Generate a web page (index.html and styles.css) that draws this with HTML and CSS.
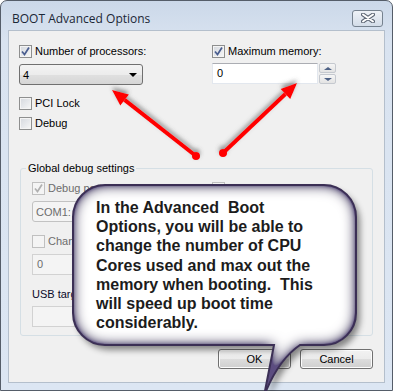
FILE: index.html
```html
<!DOCTYPE html>
<html lang="en">
<head>
    <meta charset="UTF-8">
    <title>BOOT Advanced Options</title>
    <link rel="stylesheet" href="styles.css">
</head>
<body>
    <div class="window">
        <div class="titlebar">
            <span class="title">BOOT Advanced Options</span>
            <span class="close">
                <svg width="14" height="10" viewBox="0 0 14 10">
                    <path d="M2 1.5 L12 8.5 M12 1.5 L2 8.5" stroke="#5d6674" stroke-width="4" stroke-linecap="round"/>
                    <path d="M2 1.5 L12 8.5 M12 1.5 L2 8.5" stroke="#fff" stroke-width="2" stroke-linecap="round"/>
                </svg>
            </span>
        </div>
        <div class="client">
            <div class="cols">
                <div class="col">
                    <label class="check"><span class="cb on"><svg viewBox="0 0 11 11"><polyline points="2,5.5 4.5,8.5 9,1.5"/></svg></span>Number of processors:</label>
                    <div class="combo"><span>4</span><i class="caret"></i></div>
                </div>
                <div class="col">
                    <label class="check"><span class="cb on"><svg viewBox="0 0 11 11"><polyline points="2,5.5 4.5,8.5 9,1.5"/></svg></span>Maximum memory:</label>
                    <div class="spin">
                        <div class="field">0</div>
                        <div class="updown">
                            <span class="arrow up"></span>
                            <span class="arrow down"></span>
                        </div>
                    </div>
                </div>
            </div>
            <div class="opts">
                <label class="check"><span class="cb"></span>PCI Lock</label>
                <label class="check"><span class="cb"></span>Debug</label>
            </div>
            <fieldset class="group">
                <legend>Global debug settings</legend>
                <div class="cols inner">
                    <div class="col">
                        <label class="check off"><span class="cb on"><svg viewBox="0 0 11 11"><polyline points="2,5.5 4.5,8.5 9,1.5"/></svg></span>Debug port:</label>
                        <div class="combo off"><span>COM1:</span><i class="caret"></i></div>
                    </div>
                    <div class="col">
                        <label class="check off"><span class="cb"></span>Baud rate:</label>
                        <div class="combo off narrow"><span>115200</span><i class="caret"></i></div>
                    </div>
                </div>
                <div class="row">
                    <label class="check off"><span class="cb"></span>Channel:</label>
                    <div class="field off">0</div>
                </div>
                <div class="usb">USB target name:</div>
                <div class="field off usb-field"></div>
            </fieldset>
            <div class="buttons">
                <button class="btn">OK</button>
                <button class="btn">Cancel</button>
            </div>
        </div>
    </div>

    <svg class="overlay" width="393" height="391" viewBox="0 0 393 391">
        <defs>
            <filter id="arrow_shadow" x="-20%" y="-20%" width="140%" height="140%">
                <feDropShadow dx="0" dy="-3" stdDeviation="2" flood-color="#555" flood-opacity="0.6"/>
            </filter>
            <filter id="bubble_fx" x="-10%" y="-10%" width="125%" height="130%">
                <feGaussianBlur in="SourceAlpha" stdDeviation="7" result="blur"/>
                <feComposite in="SourceAlpha" in2="blur" operator="arithmetic" k2="2" k3="-2" result="edge"/>
                <feFlood flood-color="#5b4d80"/>
                <feComposite in2="edge" operator="in" result="glow"/>
                <feMerge result="shape">
                    <feMergeNode in="SourceGraphic"/>
                    <feMergeNode in="glow"/>
                </feMerge>
                <feGaussianBlur in="SourceAlpha" stdDeviation="3" result="sb"/>
                <feOffset in="sb" dx="4" dy="5" result="so"/>
                <feFlood flood-color="#000" flood-opacity="0.45"/>
                <feComposite in2="so" operator="in" result="shadow"/>
                <feMerge>
                    <feMergeNode in="shadow"/>
                    <feMergeNode in="shape"/>
                </feMerge>
            </filter>
        </defs>

        <g filter="url(#arrow_shadow)" fill="#ff0000" stroke="#ff0000">
            <line x1="196" y1="156" x2="124.6" y2="99.9" stroke-width="4"/>
            <polygon points="112,90 128.9,94.4 120.3,105.4" stroke="none"/>
            <circle cx="196" cy="156" r="4" stroke="none"/>
            <line x1="223" y1="153" x2="285.4" y2="94" stroke-width="4"/>
            <polygon points="297,83 290.2,99.1 280.6,88.9" stroke="none"/>
            <circle cx="223" cy="153" r="4" stroke="none"/>
        </g>

        <path filter="url(#bubble_fx)" fill="#fff"
              d="M105 185 H324 A32 32 0 0 1 356 217 V313 A32 32 0 0 1 324 345 H300 Q278 360 264 396 L274 345 H105 A32 32 0 0 1 73 313 V217 A32 32 0 0 1 105 185 Z"/>
        <path fill="none" stroke="#3b2f55" stroke-width="2"
              d="M105 185 H324 A32 32 0 0 1 356 217 V313 A32 32 0 0 1 324 345 H300 Q278 360 264 396 L274 345 H105 A32 32 0 0 1 73 313 V217 A32 32 0 0 1 105 185 Z"/>
    </svg>

    <div class="callout-text">In the Advanced&nbsp; Boot<br>Options, you will be able to<br>change the number of CPU<br>Cores used and max out the<br>memory when booting.&nbsp; This<br>will speed up boot time<br>considerably.</div>
</body>
</html>
```

FILE: styles.css
```css
* {
    padding: 0;
    margin: 0;
    box-sizing: border-box;
}

body {
    width: 393px;
    height: 391px;
    position: relative;
    overflow: hidden;
    background: #fff;
    font: 11px "Liberation Sans", Arial, sans-serif;
    color: #000;
}

.window {
    width: 393px;
    height: 391px;
    display: flex;
    flex-direction: column;
    border: 1px solid #555d69;
    border-radius: 7px 7px 0 0;
    background: linear-gradient(#cbd8e9, #d9e3f0 40px, #dce6f3);
    padding: 0 7px 7px;
}

.titlebar {
    height: 29px;
    display: flex;
    align-items: center;
    justify-content: space-between;
    padding: 5px 2px 0 4px;
}

.title {
    font: 12px "Open Sans", sans-serif;
    color: #1b2736;
}

.close {
    width: 31px;
    height: 17px;
    display: flex;
    align-items: center;
    justify-content: center;
    border: 1px solid #76828f;
    border-radius: 3px;
    background: linear-gradient(#eef2f7, #d3dce8);
}

.client {
    flex: 1;
    background: #f0f0f0;
    border: 1px solid #b4bfcc;
    padding: 14px 11px 0 10px;
}

.cols {
    display: grid;
    grid-template-columns: 193px 1fr;
}

.check {
    display: flex;
    align-items: center;
    gap: 3px;
    height: 13px;
    line-height: 13px;
    white-space: nowrap;
}

.check.off {
    color: #6d6d6d;
}

.cb {
    width: 13px;
    height: 13px;
    flex: none;
    border: 1px solid #8e8f8f;
    background: linear-gradient(135deg, #d4d8de, #f7f7f7);
    box-shadow: inset 0 0 0 1px #f4f4f4;
}

.cb svg {
    display: block;
    width: 11px;
    height: 11px;
}

.cb polyline {
    fill: none;
    stroke: #4a5e90;
    stroke-width: 1.7;
}

.off .cb {
    border-color: #c0c0c0;
    background: #f4f4f4;
}

.off .cb polyline {
    stroke: #b0b0b0;
}

.combo {
    margin-top: 6px;
    width: 124px;
    height: 21px;
    display: flex;
    align-items: center;
    justify-content: space-between;
    padding: 0 5px 0 3px;
    border: 1px solid #707070;
    border-radius: 3px;
    background: linear-gradient(#f3f3f3, #ececec 50%, #e0e0e0 51%, #d6d6d6);
}

.caret {
    width: 0;
    height: 0;
    border-left: 4px solid transparent;
    border-right: 4px solid transparent;
    border-top: 4px solid #000;
}

.combo.off {
    width: 150px;
    color: #6d6d6d;
    border-color: #c2c2c2;
    background: #f4f4f4;
}

.combo.narrow {
    width: 120px;
}

.combo.off .caret {
    border-top-color: #a0a0a0;
}

.spin {
    margin-top: 5px;
    display: flex;
    gap: 1px;
}

.field {
    width: 106px;
    height: 21px;
    line-height: 19px;
    padding-left: 4px;
    background: #fff;
    border: 1px solid #e2e7ee;
    border-top-color: #abadb3;
}

.field.off {
    background: #f4f4f4;
    border-color: #d2d2d2;
    color: #6d6d6d;
}

.updown {
    width: 17px;
    height: 21px;
    display: flex;
    flex-direction: column;
    gap: 1px;
}

.arrow {
    flex: 1;
    display: flex;
    align-items: center;
    justify-content: center;
    border: 1px solid #c5c9cf;
    border-radius: 2px;
    background: linear-gradient(#f6f6f6, #e3e3e3);
}

.arrow::after {
    content: "";
    border-left: 4px solid transparent;
    border-right: 4px solid transparent;
}

.up::after {
    border-bottom: 3px solid #4d6185;
}

.down::after {
    border-top: 3px solid #4d6185;
}

.opts {
    margin-top: 12px;
    display: flex;
    flex-direction: column;
    gap: 7px;
}

.group {
    margin: 32px 0 0 1px;
    min-width: 0;
    border: 1px solid #d5dfe5;
    border-radius: 3px;
    padding: 7px 11px 8px;
}

.group legend {
    margin-left: -6px;
    padding: 0 2px;
    line-height: 13px;
}

.inner {
    grid-template-columns: 180px 1fr;
}

.row {
    margin-top: 13px;
}

.row .field {
    margin-top: 6px;
}

.usb {
    margin-top: 13px;
    line-height: 13px;
    color: #0a0a2a;
}

.usb-field {
    margin-top: 5px;
    width: 200px;
}

.buttons {
    margin-top: 13px;
    display: flex;
    justify-content: flex-end;
    gap: 9px;
}

.btn {
    width: 73px;
    height: 20px;
    font: 11px "Liberation Sans", Arial, sans-serif;
    color: #000;
    border: 1px solid #707070;
    border-radius: 3px;
    background: linear-gradient(#f2f2f2, #ebebeb 50%, #dddddd 51%, #cfcfcf);
    box-shadow: inset 0 0 0 1px #fcfcfc;
}

.overlay {
    position: absolute;
    top: 0;
    left: 0;
}

.callout-text {
    position: absolute;
    left: 96px;
    top: 198px;
    width: 262px;
    font: bold 16px "Liberation Sans", Arial, sans-serif;
    line-height: 19.2px;
    color: #1c1c1c;
    white-space: nowrap;
}
```
